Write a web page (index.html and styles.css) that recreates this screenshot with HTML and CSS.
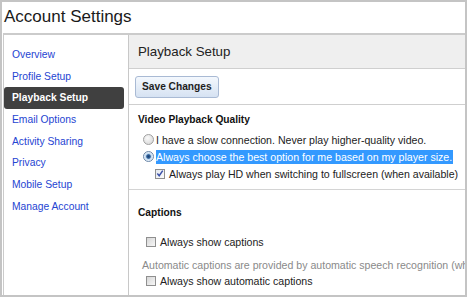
FILE: index.html
```html
<!DOCTYPE html>
<html>
<head>
	<meta charset="utf-8">
	<meta name="viewport" content="width=device-width"/>
	<link rel="stylesheet" href="styles.css">
</head>
<body>
<div class="frame">
	<div class="title">Account Settings</div>
	<div class="panel">
		<div class="side">
			<a class="link">Overview</a>
			<a class="link">Profile Setup</a>
			<a class="link on">Playback Setup</a>
			<a class="link">Email Options</a>
			<a class="link">Activity Sharing</a>
			<a class="link">Privacy</a>
			<a class="link">Mobile Setup</a>
			<a class="link">Manage Account</a>
		</div>
		<div class="main">
			<div class="mainhead">Playback Setup</div>
			<div class="bar">
				<span class="savebtn">Save Changes</span>
			</div>
			<div class="section first">
				<div class="label">Video Playback Quality</div>
				<div class="row">
					<span class="radio"></span>
					<span class="txt">I have a slow connection. Never play higher-quality video.</span>
				</div>
				<div class="row">
					<span class="radio checked"></span>
					<span class="txt sel">Always choose the best option for me based on my player size.</span>
				</div>
				<div class="row sub">
					<span class="check checked">
						<svg width="9" height="9" viewBox="0 0 9 9"><path d="M1.5 4.5 L3.6 7 L7.6 1.2" fill="none" stroke="#3a4fa8" stroke-width="1.6"/></svg>
					</span>
					<span class="txt">Always play HD when switching to fullscreen (when available)</span>
				</div>
			</div>
			<div class="section second">
				<div class="label">Captions</div>
				<div class="row opt">
					<span class="check"></span>
					<span class="txt">Always show captions</span>
				</div>
				<div class="note">Automatic captions are provided by automatic speech recognition (wh</div>
				<div class="row opt">
					<span class="check"></span>
					<span class="txt">Always show automatic captions</span>
				</div>
			</div>
		</div>
	</div>
</div>
</body>
</html>
```

FILE: styles.css
```css
* {
	padding: 0;
	margin: 0;
	box-sizing: border-box;
}

body {
	font-family: "Liberation Sans", Arial, sans-serif;
	background: #fff;
	color: #222;
}

.frame {
	width: 467px;
	height: 297px;
	border: 2px solid #c4c4c4;
	overflow: hidden;
	display: flex;
	flex-direction: column;
}

.title {
	height: 31px;
	line-height: 30px;
	padding-left: 2px;
	font-size: 17px;
	color: #1a1a1a;
	white-space: nowrap;
}

.panel {
	flex: 1;
	display: flex;
	margin-left: 1px;
	border-top: 2px solid #cbcbcb;
	border-left: 1px solid #cbcbcb;
}

.side {
	width: 125px;
	flex: none;
	padding-top: 9px;
	border-right: 1px solid #c8c8c8;
	display: flex;
	flex-direction: column;
}

.link {
	display: block;
	height: 21.7px;
	line-height: 21.7px;
	padding-left: 8px;
	font-size: 10.3px;
	color: #2544d2;
	white-space: nowrap;
}

.link.on {
	margin-right: 4px;
	background: #404040;
	color: #fff;
	font-weight: bold;
	border-radius: 3px;
}

.main {
	flex: 1;
	min-width: 0;
	display: flex;
	flex-direction: column;
}

.mainhead {
	height: 34px;
	line-height: 33px;
	padding-left: 9px;
	font-size: 13.3px;
	background: #efefef;
	border-bottom: 1px solid #cfcfcf;
	white-space: nowrap;
}

.bar {
	height: 36px;
	padding: 7px 0 0 6px;
	border-bottom: 1px solid #cfcfcf;
}

.savebtn {
	display: inline-block;
	height: 22px;
	line-height: 20px;
	padding: 0 6px;
	font-size: 10.2px;
	font-weight: bold;
	color: #1e1e1e;
	border: 1px solid #a9bad4;
	border-radius: 3px;
	background: linear-gradient(#f4f8fd, #d6e2f2);
}

.section {
	white-space: nowrap;
}

.section.first {
	height: 85px;
	padding: 7px 0 0 9px;
	border-bottom: 1px solid #d4d4d4;
}

.section.second {
	padding: 15px 0 0 9px;
}

.label {
	height: 16px;
	line-height: 16px;
	font-size: 10.2px;
	font-weight: bold;
	color: #111;
	margin-bottom: 3px;
}

.second .label {
	margin-bottom: 13px;
}

.row {
	height: 17px;
	display: flex;
	align-items: center;
	font-size: 10.6px;
	color: #222;
}

.first .row {
	padding-left: 5px;
}

.first .row.sub {
	padding-left: 17px;
}

.second .row.opt {
	padding-left: 8px;
	height: 16px;
}

.radio {
	width: 11px;
	height: 11px;
	flex: none;
	border-radius: 50%;
	border: 1px solid #a0a0a0;
	background: radial-gradient(circle at 40% 35%, #fafafa, #d2d2d2);
	margin-right: 2px;
}

.radio.checked {
	border-color: #6a86a8;
	background: radial-gradient(circle, #1f3f6e 0, #2d5f98 1.8px, #bcd6ef 2.8px, #eef5fb 4.5px);
}

.check {
	width: 10px;
	height: 10px;
	flex: none;
	border: 1px solid #8f8f8f;
	background: linear-gradient(135deg, #d6d6d6, #f7f7f7);
	margin-right: 4px;
	display: flex;
	align-items: center;
	justify-content: center;
}

.check.checked {
	background: linear-gradient(135deg, #e4e8ee, #fbfbfb);
}

.check svg {
	display: block;
}

.txt.sel {
	background: #3399ff;
	color: #fff;
	padding: 1px 1px 1px 0;
	line-height: 12px;
}

.note {
	height: 16px;
	line-height: 16px;
	margin-top: 7px;
	padding-left: 4px;
	font-size: 10.6px;
	color: #8a8a8a;
}
```
